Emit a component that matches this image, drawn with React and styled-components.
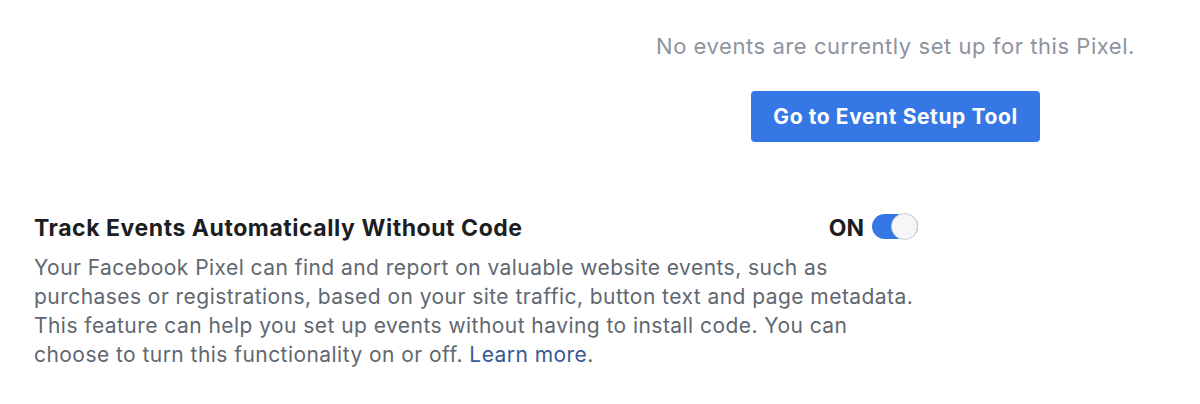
import styled, { createGlobalStyle } from "styled-components";
import { useState } from "react";

const GlobalStyle = createGlobalStyle`
  body {
    margin: 0;
    background: #ffffff;
    font-family: Inter, "Helvetica Neue", Arial, sans-serif;
    -webkit-font-smoothing: antialiased;
  }
`;

const Page = styled.div`
  width: 1200px;
  height: 404px;
  box-sizing: border-box;
  padding: 32px 0 0 34px;
`;

const EmptyState = styled.div`
  display: flex;
  flex-direction: column;
  align-items: center;
  width: 481px;
  margin-left: 621px;
  gap: 31px;
`;

const EmptyText = styled.p`
  margin: 0;
  font-size: 22px;
  letter-spacing: 0.55px;
  line-height: 28px;
  color: #8d949e;
  white-space: nowrap;
`;

const PrimaryButton = styled.button`
  height: 51px;
  padding: 0 22px;
  border: none;
  border-radius: 4px;
  background: #3578e5;
  color: #ffffff;
  font-family: inherit;
  font-size: 21px;
  letter-spacing: 0.6px;
  font-weight: 700;
  cursor: pointer;
`;

const Setting = styled.section`
  margin-top: 71px;
  width: 884px;
`;

const SettingHead = styled.div`
  display: flex;
  justify-content: space-between;
  align-items: center;
`;

const Title = styled.h3`
  margin: 0;
  font-size: 23px;
  letter-spacing: 0.55px;
  line-height: 30px;
  font-weight: 700;
  color: #1c1e21;
`;

const ToggleWrap = styled.label`
  display: flex;
  align-items: center;
  gap: 8px;
  font-size: 23px;
  font-weight: 700;
  color: #1c1e21;
  cursor: pointer;
`;

const Track = styled.span`
  position: relative;
  width: 46px;
  height: 25px;
  margin-top: -4px;
  border-radius: 13px;
  background: ${(p) => (p.$on ? "#3578e5" : "#ccd0d5")};
`;

const Knob = styled.span`
  position: absolute;
  top: -1px;
  left: ${(p) => (p.$on ? "19px" : "0")};
  width: 27px;
  height: 27px;
  box-sizing: border-box;
  border-radius: 50%;
  background: #f5f6f7;
  border: 1px solid #ccd0d5;
`;

const Description = styled.p`
  margin: 10px 0 0;
  font-size: 21px;
  letter-spacing: 0.45px;
  line-height: 29px;
  color: #606770;
`;

const Link = styled.a`
  color: #385898;
  text-decoration: none;
`;

const App = () => {
  const [on, setOn] = useState(true);

  return (
    <Page>
      <GlobalStyle />
      <EmptyState>
        <EmptyText>No events are currently set up for this Pixel.</EmptyText>
        <PrimaryButton>Go to Event Setup Tool</PrimaryButton>
      </EmptyState>
      <Setting>
        <SettingHead>
          <Title>Track Events Automatically Without Code</Title>
          <ToggleWrap onClick={() => setOn((prev) => !prev)}>
            {on ? "ON" : "OFF"}
            <Track $on={on}>
              <Knob $on={on} />
            </Track>
          </ToggleWrap>
        </SettingHead>
        <Description>
          Your Facebook Pixel can find and report on valuable website events, such as
          <br />
          purchases or registrations, based on your site traffic, button text and page metadata.
          <br />
          This feature can help you set up events without having to install code. You can
          <br />
          choose to turn this functionality on or off. <Link href="#">Learn more</Link>.
        </Description>
      </Setting>
    </Page>
  );
};

export default App;
